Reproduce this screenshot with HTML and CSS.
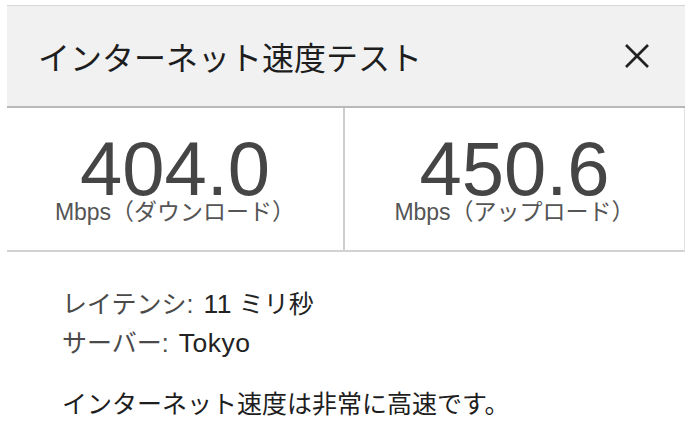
FILE: index.html
```html
<!DOCTYPE html>
<html lang="ja">
<head>
<meta charset="utf-8">
<link rel="stylesheet" href="styles.css">
</head>
<body>
<div class="panel">
  <div class="header">
    <div class="title">インターネット速度テスト</div>
    <svg class="close" width="26" height="24" viewBox="0 0 26 24" aria-label="閉じる">
      <line x1="2" y1="1" x2="24" y2="23" />
      <line x1="24" y1="1" x2="2" y2="23" />
    </svg>
  </div>
  <div class="stats">
    <div class="stat stat-left">
      <div class="num">404.0</div>
      <div class="unit">Mbps（ダウンロード）</div>
    </div>
    <div class="stat">
      <div class="num">450.6</div>
      <div class="unit">Mbps（アップロード）</div>
    </div>
  </div>
  <div class="info">
    <div class="line"><span class="label">レイテンシ:</span> <span class="value"><span class="latin">11</span> ミリ秒</span></div>
    <div class="line"><span class="label">サーバー:</span> <span class="value latin">Tokyo</span></div>
    <div class="line summary">インターネット速度は非常に高速です。</div>
  </div>
</div>
</body>
</html>
```

FILE: styles.css
```css
html, body {
  margin: 0;
  padding: 0;
  background: #ffffff;
}

body {
  font-family: "Liberation Sans", "Noto Sans CJK JP", sans-serif;
  color: #222;
}

.panel {
  margin: 5px 7px 0 7px;
}

.header {
  height: 100px;
  background: #f1f1f2;
  border-top: 1px solid #d6d6d6;
  border-bottom: 2px solid #b9b9b9;
  display: flex;
  align-items: center;
  justify-content: space-between;
  padding: 0 35px 0 31px;
}

.title {
  font-family: "Noto Sans CJK JP", sans-serif;
  font-size: 32px;
  color: #1e1e1e;
  line-height: 1;
}

.close line {
  stroke: #222;
  stroke-width: 2.6;
  stroke-linecap: butt;
}

.stats {
  display: grid;
  grid-template-columns: 338px 1fr;
  height: 142px;
  border-bottom: 2px solid #d2d2d2;
  border-right: 1px solid #e2e2e2;
}

.stat {
  display: flex;
  flex-direction: column;
  align-items: center;
  padding-top: 31px;
}

.stat-left {
  border-right: 2px solid #cdcdcd;
}

.num {
  font-size: 76px;
  line-height: 60px;
  color: #454545;
}

.unit {
  font-size: 23px;
  line-height: 26px;
  color: #555;
}

.info {
  padding: 33px 0 0 55px;
  font-size: 25px;
}

.line {
  line-height: 39px;
}

.latin {
  font-size: 26.5px;
  letter-spacing: 0.5px;
}

.label {
  color: #4a4a4a;
}

.value {
  color: #222;
  margin-left: 3px;
}

.summary {
  margin-top: 22px;
  color: #1e1e1e;
}
```
